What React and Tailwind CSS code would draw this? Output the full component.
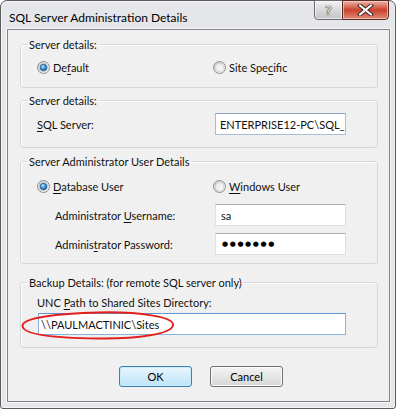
import React from "react";

function Radio({ checked }) {
  return (
    <svg width="13" height="13" viewBox="0 0 13 13" className="shrink-0">
      <defs>
        <linearGradient id="rbg" x1="0" y1="0" x2="1" y2="1">
          <stop offset="0" stopColor="#cfcfcf" />
          <stop offset="1" stopColor="#fbfbfb" />
        </linearGradient>
        <linearGradient id="rin" x1="0" y1="0" x2="1" y2="1">
          <stop offset="0" stopColor="#e4e4e4" />
          <stop offset="1" stopColor="#fdfdfd" />
        </linearGradient>
        <radialGradient id="rdot" cx="0.4" cy="0.35" r="0.75">
          <stop offset="0" stopColor="#b9ecff" />
          <stop offset="0.45" stopColor="#3a9be0" />
          <stop offset="1" stopColor="#114f8c" />
        </radialGradient>
      </defs>
      <circle cx="6.5" cy="6.5" r="6" fill="url(#rbg)" stroke="#8e8f8f" />
      <circle cx="6.5" cy="6.5" r="4.3" fill="url(#rin)" stroke="#bcbcbc" strokeWidth="0.6" />
      {checked && <circle cx="6.5" cy="6.5" r="3.3" fill="url(#rdot)" stroke="#1c4a7a" strokeWidth="0.7" />}
    </svg>
  );
}

function U({ children }) {
  return <span className="underline underline-offset-[2px] decoration-[1px]">{children}</span>;
}

function Group({ title, className, children }) {
  return (
    <fieldset className={"ml-[12px] mr-[11px] border border-[#d5d9dd] rounded-[3px] shadow-[inset_1px_1px_0_#ffffff] " + className}>
      <legend className="ml-[6px] px-[2px] leading-[15px]">{title}</legend>
      {children}
    </fieldset>
  );
}

export default function App() {
  return (
    <div className="w-[396px] h-[409px] bg-white font-['Lato',sans-serif] text-[11px] leading-[15px] text-[#101010]">
      <div className="w-full h-full flex flex-col border border-[#5a5a5a] rounded-t-[7px] rounded-b-[3px] bg-[#e4e6e9] pl-[6px] pr-[5px] pb-[6px] shadow-[inset_1px_1px_0_#f6f6f6,inset_-1px_-1px_0_#f3f3f3]">
        {/* Title bar */}
        <div className="h-[28px] flex items-start justify-between shrink-0">
          <div className="pt-[9px] pl-[2px] text-[12px] text-black">SQL Server Administration Details</div>
          <div className="flex -mt-[1px] mr-[1px]">
            <div className="w-[29px] h-[20px] border border-[#6d6d6d] rounded-bl-[4px] bg-linear-to-b from-[#f2f2f2] via-[#d9d9d9] to-[#c4c4c4] shadow-[inset_0_0_0_1px_rgba(255,255,255,0.6)] flex items-center justify-center">
              <span className="text-[13px] leading-[13px] text-[#f7f7f7] font-['DejaVu_Sans',sans-serif] [text-shadow:0_0_1px_#333,0_0_1px_#333,0_0_1px_#333]">?</span>
            </div>
            <div className="w-[47px] h-[20px] -ml-[1px] border border-[#5a2a24] rounded-br-[4px] bg-linear-to-b from-[#eab2a6] via-[#c9402a] to-[#dd8a78] shadow-[inset_0_0_0_1px_rgba(255,220,210,0.6)] flex items-center justify-center">
              <svg width="17" height="12" viewBox="0 0 17 12">
                <path d="M3 1.5 L14 10.5 M14 1.5 L3 10.5" stroke="#3d2222" strokeWidth="4" strokeLinecap="square" />
                <path d="M3 1.5 L14 10.5 M14 1.5 L3 10.5" stroke="#ffffff" strokeWidth="2" strokeLinecap="square" />
              </svg>
            </div>
          </div>
        </div>

        {/* Client area */}
        <div className="flex-1 flex flex-col border border-[#838383] bg-[#f0f0f0] shadow-[0_0_0_1px_#f7f7f7] pt-[7px]">
          <Group title="Server details:" className="pb-[12px]">
            <div className="flex items-center pt-[8px] pl-[16px]">
              <div className="w-[176px] flex items-center gap-[3px]">
                <Radio checked />
                <span>De<U>f</U>ault</span>
              </div>
              <div className="flex items-center gap-[3px]">
                <Radio />
                <span>Site Spe<U>c</U>ific</span>
              </div>
            </div>
          </Group>

          <Group title="Server details:" className="mt-[5px] pb-[12px]">
            <div className="flex items-center pt-[5px] pl-[16px] pr-[31px]">
              <span className="flex-1"><U>S</U>QL Server:</span>
              <div className="w-[131px] h-[22px] border border-[#a9bed6] border-t-[#8ea6c4] bg-white flex items-center pl-[4px] overflow-hidden whitespace-nowrap">
                ENTERPRISE12-PC\SQL_S
              </div>
            </div>
          </Group>

          <Group title="Server Administrator User Details" className="mt-[6px] pb-[8px]">
            <div className="flex items-center pt-[10px] pl-[16px]">
              <div className="w-[176px] flex items-center gap-[3px]">
                <Radio checked />
                <span><U>D</U>atabase User</span>
              </div>
              <div className="flex items-center gap-[3px]">
                <Radio />
                <span><U>W</U>indows User</span>
              </div>
            </div>
            <div className="flex items-center mt-[10px] pl-[34px] pr-[31px]">
              <span className="flex-1">Administrator <U>U</U>sername:</span>
              <div className="w-[131px] h-[22px] border border-[#dbdfe6] border-t-[#abadb3] bg-white flex items-center pl-[5px]">sa</div>
            </div>
            <div className="flex items-center mt-[7px] pl-[34px] pr-[31px]">
              <span className="flex-1">Adminis<U>t</U>rator Password:</span>
              <div className="w-[131px] h-[22px] border border-[#dbdfe6] border-t-[#abadb3] bg-white flex items-center pl-[6px] text-[7px] tracking-[1.6px] font-['DejaVu_Sans',sans-serif] text-black">
                ●●●●●●●
              </div>
            </div>
          </Group>

          <Group title="Backup Details: (for remote SQL server only)" className="mt-[11px] pb-[12px]">
            <div className="pt-[5px] pl-[16px]">UNC <U>P</U>ath to Shared Sites Directory:</div>
            <div className="relative mt-[3px] ml-[17px] mr-[31px]">
              <div className="h-[22px] border border-[#85b3e2] border-t-[#5d96d1] bg-white flex items-center pl-[2px]">
                \\PAULMACTINIC\Sites
              </div>
              <svg className="absolute left-[-18px] top-[-4px]" width="156" height="32" viewBox="0 0 156 32">
                <path d="M78 3.5 C120 2.5 154 8 153 16 C152 25 118 30 78 29.5 C36 29 3 26 2.5 17 C2 8.5 38 4.5 78 3.5 Z" fill="none" stroke="#e3201e" strokeWidth="2" />
              </svg>
            </div>
          </Group>

          <div className="flex pl-[111px] gap-[18px] mt-[18px]">
            <button className="w-[73px] h-[21px] border border-[#3c7fb1] rounded-[3px] bg-linear-to-b from-[#e9f6fd] to-[#bde4fa] shadow-[inset_0_0_0_1px_#c8ecfd] text-black">OK</button>
            <button className="w-[73px] h-[21px] border border-[#707070] rounded-[3px] bg-linear-to-b from-[#f4f4f4] to-[#d6d6d6] shadow-[inset_0_0_0_1px_#fbfbfb] text-black">Cancel</button>
          </div>
        </div>
      </div>
    </div>
  );
}
